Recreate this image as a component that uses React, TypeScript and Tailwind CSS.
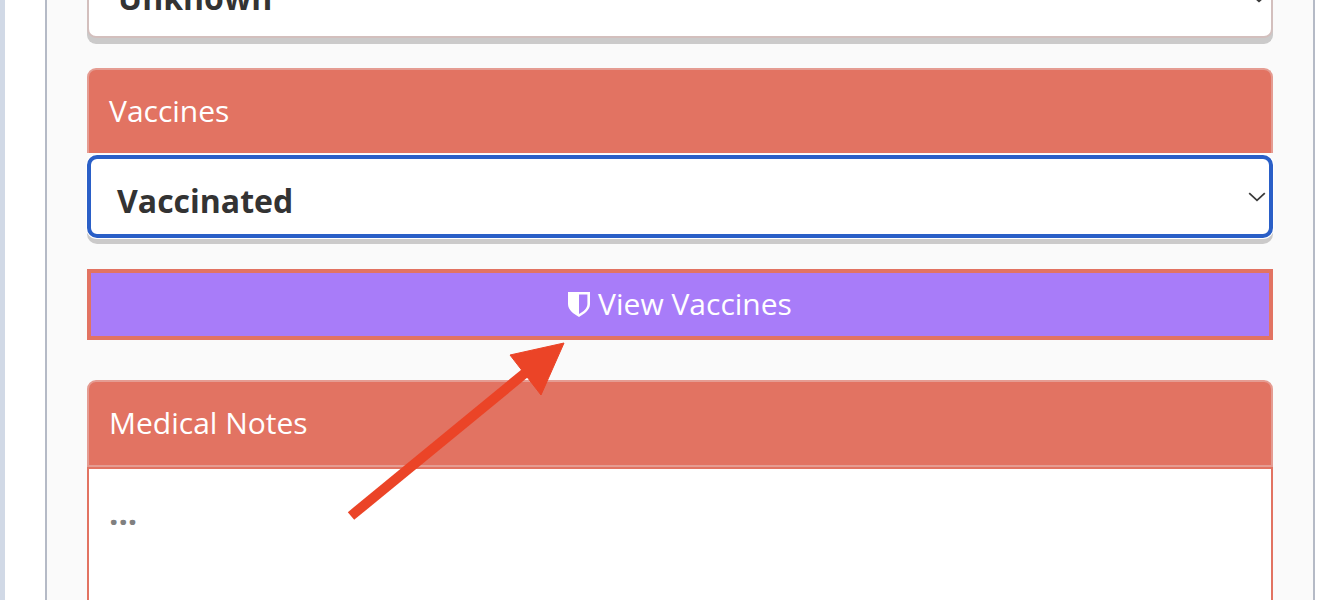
import React from "react";

function Chevron() {
  return (
    <svg className="absolute right-[3px] top-1/2 -translate-y-[5px]" width="18" height="10" viewBox="0 0 18 10" fill="none">
      <path d="M1.2 1.2 L9 8.4 L16.8 1.2" stroke="#3a3a3a" strokeWidth="1.8" />
    </svg>
  );
}

export default function App() {
  return (
    <div className="relative h-[600px] w-[1334px] overflow-hidden bg-white font-['Open_Sans',sans-serif]">
      <div className="flex h-full">
        <div className="h-full w-[5px] shrink-0 bg-[#d1d9e6]" />
        <div className="ml-[40px] h-full w-[1270px] shrink-0 border-x-2 border-[#b5bac6] bg-[#fafafa] px-[40px]">
          <div className="-mt-[46px] h-[84px] rounded-b-[9px] border-2 border-[#d3bfbd] bg-white pl-[29px] pt-[20px] text-[32px] font-bold leading-[44px] text-[#333] shadow-[0_6px_0_#cbcaca] relative">
            Unknown
            <svg className="absolute right-[3px] top-[37px]" width="18" height="10" viewBox="0 0 18 10" fill="none">
              <path d="M1.2 1.2 L9 8.4 L16.8 1.2" stroke="#3a3a3a" strokeWidth="1.8" />
            </svg>
          </div>

          <div className="mt-[30px]">
            <div className="h-[85px] rounded-t-[9px] border-x-2 border-t-2 border-[#e59c92] bg-[#e27362] pl-[20px] pt-[21px] text-[30px] leading-[40px] text-white">
              Vaccines
            </div>
            <div className="relative mt-[2px] h-[83px] rounded-[10px] border-[4px] border-[#2a5fc7] bg-white pl-[26px] pt-[20px] text-[32px] font-bold leading-[44px] text-[#333] shadow-[0_0_0_1px_#fff,0_6px_0_#cbcaca]">
              Vaccinated
              <Chevron />
            </div>
          </div>

          <div className="mt-[31px] flex h-[71px] items-center justify-center gap-[8px] border-[4px] border-[#e27362] bg-[#a87cf9] pb-[2px] text-[30px] leading-[40px] text-white">
            <svg width="22" height="26" viewBox="0 0 22 26">
              <path
                fillRule="evenodd"
                d="M0 1 H22 V13 C22 19 16 23 11 26 C6 23 0 19 0 13 Z M11 3.5 V23 C15.5 20.6 19.4 17.5 19.4 13 V3.5 Z"
                fill="#fff"
              />
            </svg>
            <span>View Vaccines</span>
          </div>

          <div className="mt-[40px]">
            <div className="h-[87px] rounded-t-[9px] border-2 border-[#e59c92] bg-[#e27362] pl-[20px] pt-[21px] text-[30px] leading-[40px] text-white">
              Medical Notes
            </div>
            <div className="h-[160px] border-2 border-[#e27362] bg-white pl-[20px] pt-[24px] text-[33px] font-bold leading-[40px] text-[#808080]">
              ...
            </div>
          </div>
        </div>
      </div>

      <svg className="pointer-events-none absolute left-[340px] top-[335px]" width="235" height="195" viewBox="0 0 235 195" fill="none">
        <path d="M11 181 L190 34" stroke="#eb4427" strokeWidth="10" />
        <path d="M224 8 L170 20 L201 60 Z" fill="#eb4427" stroke="#eb4427" />
      </svg>
    </div>
  );
}
